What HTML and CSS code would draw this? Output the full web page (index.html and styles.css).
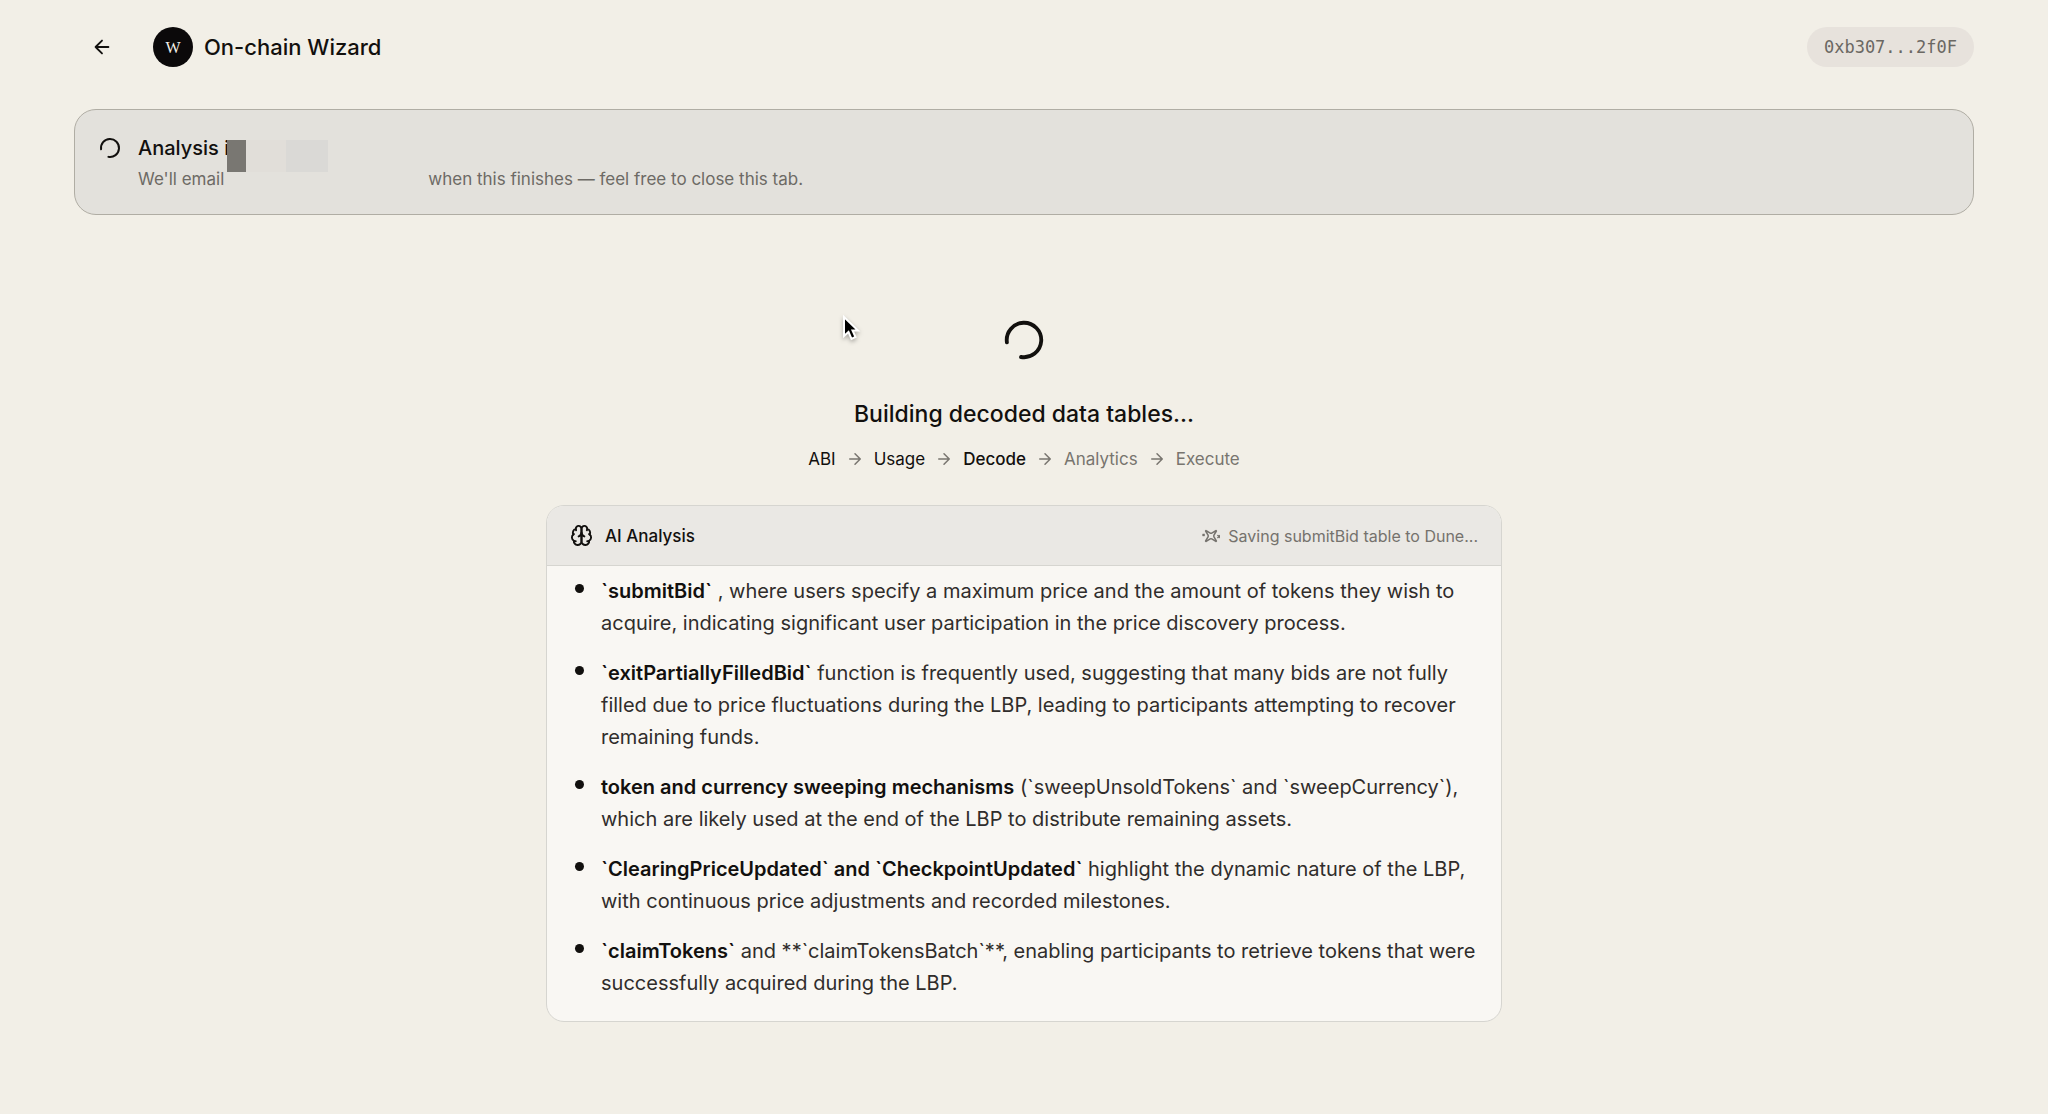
FILE: index.html
```html
<!DOCTYPE html>
<html lang="en">
<head>
<meta charset="utf-8">
<meta name="viewport" content="width=device-width, initial-scale=1">
<title>On-chain Wizard</title>
<link rel="stylesheet" href="styles.css">
</head>
<body>
<header class="topbar">
  <button class="back" type="button" aria-label="Back">
    <svg class="icon back-arrow" viewBox="0 0 24 24"><path d="m12 19-7-7 7-7M19 12H5"/></svg>
  </button>
  <div class="brand">
    <span class="brand-mark">W</span>
    <span class="brand-name">On-chain Wizard</span>
  </div>
  <button class="wallet" type="button">0xb307...2f0F</button>
</header>

<main class="page">
  <section class="notice">
    <svg class="icon spinner" viewBox="0 0 24 24"><path d="M21 12a9 9 0 1 1-6.219-8.56"/></svg>
    <div class="notice-text">
      <h2 class="notice-title">Analysis i<span class="redaction"><span class="shade dark"></span><span class="shade light"></span><span class="shade mid"></span></span></h2>
      <p class="notice-body">We'll email<span class="hidden-email"></span>when this finishes — feel free to close this tab.</p>
    </div>
  </section>

  <section class="progress">
    <svg class="icon spinner spinner-large" viewBox="0 0 24 24"><path d="M21 12a9 9 0 1 1-6.219-8.56"/></svg>
    <h1 class="progress-title">Building decoded data tables...</h1>
    <ol class="steps">
      <li class="step">ABI</li>
      <li class="step"><svg class="icon arrow" viewBox="0 0 24 24"><path d="M5 12h14M12 5l7 7-7 7"/></svg>Usage</li>
      <li class="step current"><svg class="icon arrow" viewBox="0 0 24 24"><path d="M5 12h14M12 5l7 7-7 7"/></svg>Decode</li>
      <li class="step pending"><svg class="icon arrow" viewBox="0 0 24 24"><path d="M5 12h14M12 5l7 7-7 7"/></svg>Analytics</li>
      <li class="step pending"><svg class="icon arrow" viewBox="0 0 24 24"><path d="M5 12h14M12 5l7 7-7 7"/></svg>Execute</li>
    </ol>
  </section>

  <section class="card">
    <header class="card-head">
      <svg class="icon brain" viewBox="0 0 24 24"><path d="M12 5a3 3 0 1 0-5.997.125 4 4 0 0 0-2.526 5.77 4 4 0 0 0 .556 6.588A4 4 0 1 0 12 18Z"/><path d="M12 5a3 3 0 1 1 5.997.125 4 4 0 0 1 2.526 5.77 4 4 0 0 1-.556 6.588A4 4 0 1 1 12 18Z"/><path d="M15 13a4.500 4.500 0 0 1-3-4 4.500 4.500 0 0 1-3 4"/><path d="M17.599 6.500a3 3 0 0 0 .399-1.375M6.003 5.125A3 3 0 0 0 6.401 6.500M3.477 10.896a4 4 0 0 1 .585-.396M19.938 10.500a4 4 0 0 1 .585.396M6 18a4 4 0 0 1-1.967-.516M19.967 17.484A4 4 0 0 1 18 18"/></svg>
      <h2 class="card-title">AI Analysis</h2>
      <p class="status">
        <svg class="icon sparkle" viewBox="0 0 24 24"><g transform="rotate(45 12 12)"><path d="M9.937 15.500A2 2 0 0 0 8.500 14.063l-6.135-1.582a.5.5 0 0 1 0-.962L8.500 9.936A2 2 0 0 0 9.937 8.500l1.582-6.135a.5.5 0 0 1 .963 0L14.063 8.500A2 2 0 0 0 15.500 9.937l6.135 1.581a.5.5 0 0 1 0 .964L15.500 14.063a2 2 0 0 0-1.437 1.437l-1.582 6.135a.5.5 0 0 1-.963 0z"/><path d="M20 3v4M22 5h-4M4 17v2M5 18H3"/></g></svg>
        Saving submitBid table to Dune...
      </p>
    </header>
    <ul class="findings">
      <li class="finding"><strong>`submitBid`</strong> , where users specify a maximum price and the amount of tokens they wish to acquire, indicating significant user participation in the price discovery process.</li>
      <li class="finding"><strong>`exitPartiallyFilledBid`</strong> function is frequently used, suggesting that many bids are not fully filled due to price fluctuations during the LBP, leading to participants attempting to recover remaining funds.</li>
      <li class="finding"><strong>token and currency sweeping mechanisms</strong> (`sweepUnsoldTokens` and `sweepCurrency`), which are likely used at the end of the LBP to distribute remaining assets.</li>
      <li class="finding"><strong>`ClearingPriceUpdated` and `CheckpointUpdated`</strong> highlight the dynamic nature of the LBP, with continuous price adjustments and recorded milestones.</li>
      <li class="finding"><strong>`claimTokens`</strong> and **`claimTokensBatch`**, enabling participants to retrieve tokens that were successfully acquired during the LBP.</li>
    </ul>
  </section>
</main>

<svg class="cursor" viewBox="0 0 16 24"><path d="M1 1v19l4.500-4 3 7 4-2-3-6.500H15z"/></svg>
</body>
</html>
```

FILE: styles.css
```css
* {
  box-sizing: border-box;
}

body {
  margin: 0;
  min-height: 100vh;
  position: relative;
  background: #f2efe7;
  color: #12100e;
  font-family: Inter, "Liberation Sans", sans-serif;
  font-size: 20px;
}

h1, h2, p, ol, ul {
  margin: 0;
  padding: 0;
  font-weight: 500;
}

.icon {
  display: block;
  flex: none;
  width: 24px;
  height: 24px;
  fill: none;
  stroke: currentColor;
  stroke-width: 2;
  stroke-linecap: round;
  stroke-linejoin: round;
}

.topbar {
  display: flex;
  align-items: center;
  padding: 27px 74px 0;
}

.back {
  display: grid;
  place-items: center;
  width: 56px;
  height: 40px;
  padding: 0;
  border: 0;
  background: none;
  color: inherit;
}

.back-arrow {
  width: 22px;
  height: 22px;
}

.brand {
  display: flex;
  align-items: center;
  gap: 11px;
  margin-left: 23px;
}

.brand-mark {
  display: grid;
  place-items: center;
  width: 40px;
  height: 40px;
  padding-top: 2px;
  border-radius: 50%;
  background: #0b090a;
  color: #f2efe7;
  font: 16px "Liberation Serif", serif;
}

.brand-name {
  font-size: 22px;
  font-weight: 500;
}

.wallet {
  margin-left: auto;
  height: 40px;
  padding: 0 17px;
  border: 0;
  border-radius: 20px;
  background: #e7e2dc;
  color: #6b6863;
  font: 17px "DejaVu Sans Mono", monospace;
}

.page {
  padding: 42px 74px 92px;
}

.notice {
  display: flex;
  gap: 16px;
  padding: 25px 23px 23px;
  border: 1px solid #b0ada4;
  border-radius: 22px;
  background: #e3e1dc;
}

.spinner {
  height: 26px;
  transform: rotate(172deg);
}

.notice-title {
  position: relative;
  width: max-content;
  font-size: 20px;
  line-height: 26px;
}

.redaction {
  position: absolute;
  top: 5px;
  left: 100%;
  display: flex;
  height: 32px;
  margin-left: -2px;
}

.shade.dark {
  width: 19px;
  background: #797772;
}

.shade.light {
  width: 40px;
  background: #e1ded9;
}

.shade.mid {
  width: 42px;
  background: #dad9d6;
}

.notice-body {
  margin-top: 6px;
  color: #6d6a65;
  font-size: 17px;
  font-weight: 400;
  line-height: 24px;
}

.hidden-email {
  display: inline-block;
  width: 204px;
}

.progress {
  display: flex;
  flex-direction: column;
  align-items: center;
  padding-top: 102px;
}

.spinner-large {
  width: 46px;
  height: 46px;
}

.progress-title {
  margin-top: 34px;
  font-size: 23px;
  line-height: 34px;
}

.steps {
  display: flex;
  gap: 10px;
  margin-top: 16px;
  font-size: 17px;
  line-height: 24px;
  list-style: none;
}

.step {
  display: flex;
  align-items: center;
  gap: 10px;
  font-weight: 400;
}

.step.current {
  font-weight: 500;
}

.step.pending,
.arrow {
  color: #78756f;
}

.arrow {
  width: 18px;
  height: 18px;
}

.card {
  max-width: 956px;
  margin: 34px auto 0;
  overflow: hidden;
  border: 1px solid #d6d5d0;
  border-radius: 18px;
  background: #f9f7f3;
}

.card-head {
  display: flex;
  align-items: center;
  gap: 12px;
  height: 60px;
  padding: 0 23px;
  border-bottom: 1px solid #d6d5d0;
  background: #eae8e4;
}

.brain {
  width: 23px;
  height: 23px;
}

.card-title {
  font-size: 17px;
}

.status {
  display: flex;
  align-items: center;
  gap: 8px;
  margin-left: auto;
  color: #75726d;
  font-size: 16px;
  font-weight: 400;
}

.sparkle {
  width: 18px;
  height: 18px;
}

.findings {
  display: flex;
  flex-direction: column;
  gap: 18px;
  padding: 9px 20px 22px 54px;
  color: #302d2b;
  line-height: 32px;
  list-style: none;
}

.finding {
  position: relative;
  font-weight: 400;
}

.finding::before {
  content: "";
  position: absolute;
  top: 9px;
  left: -26px;
  width: 9px;
  height: 9px;
  border-radius: 50%;
  background: #12100e;
}

.finding strong {
  color: #12100e;
  font-weight: 600;
}

.cursor {
  position: absolute;
  top: 316px;
  left: 843px;
  width: 16px;
  height: 24px;
  overflow: visible;
  fill: #000;
  stroke: #fff;
  stroke-width: 2;
  filter: drop-shadow(0 2px 2px rgb(0 0 0 / 30%));
}
```
